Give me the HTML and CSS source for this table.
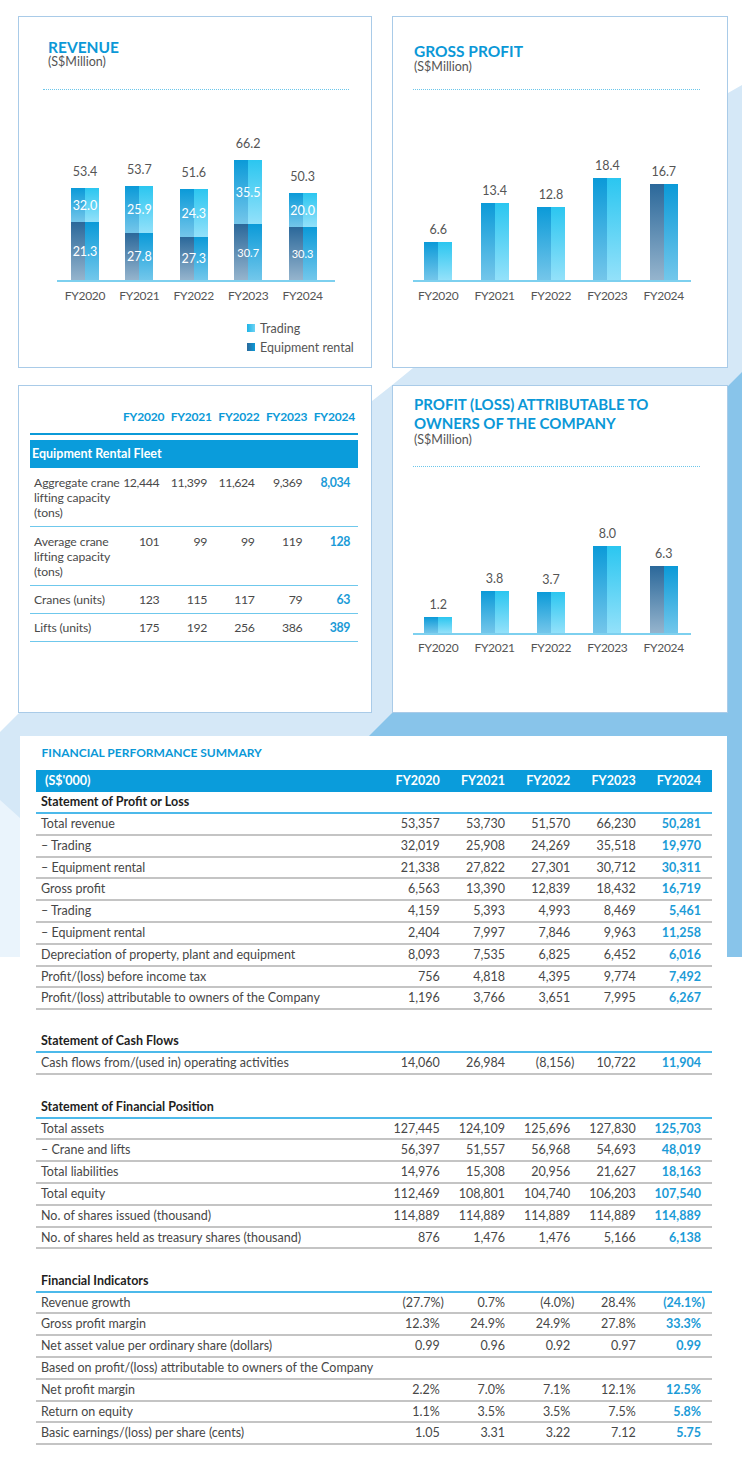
FILE: index.html
```html
<!DOCTYPE html>
<html lang="en">
<head>
<meta charset="utf-8">
<title>Financial Highlights</title>
<link rel="stylesheet" href="styles.css">
</head>
<body>
<svg class="backdrop" width="742" height="1466" viewBox="0 0 742 1466" aria-hidden="true">
  <rect class="bg-pale" x="0" y="780" width="20" height="177"/>
  <polygon class="bg-light" points="742,85 742,957 20,818 0,800 0,732 18,714 372,401 391,386 413,368 728,93"/>
  <polygon class="bg-dark" points="742,372 742,957 368,957 368,737 391,714 728,386"/>
</svg>
<main class="page">
  <div class="cards">
    <section class="card">
      <header class="chart-head head-revenue">
        <h2 class="chart-title">REVENUE</h2>
        <p class="chart-unit">(S$Million)</p>
      </header>
      <div class="dots dots-wide"></div>
      <div class="plot plot-top plot-wide">
        <div class="col">
          <span class="val">53.4</span>
          <div class="bar">
            <div class="seg trade" style="height:34px"><span>32.0</span></div>
            <div class="seg rent" style="height:58px"><span>21.3</span></div>
          </div>
        </div>
        <div class="col">
          <span class="val">53.7</span>
          <div class="bar">
            <div class="seg trade" style="height:47px"><span>25.9</span></div>
            <div class="seg rent" style="height:47px"><span>27.8</span></div>
          </div>
        </div>
        <div class="col">
          <span class="val">51.6</span>
          <div class="bar">
            <div class="seg trade" style="height:48px"><span>24.3</span></div>
            <div class="seg rent" style="height:43px"><span>27.3</span></div>
          </div>
        </div>
        <div class="col">
          <span class="val">66.2</span>
          <div class="bar">
            <div class="seg trade" style="height:64px"><span>35.5</span></div>
            <div class="seg rent" style="height:56px"><span class="small">30.7</span></div>
          </div>
        </div>
        <div class="col">
          <span class="val">50.3</span>
          <div class="bar">
            <div class="seg trade" style="height:34px"><span>20.0</span></div>
            <div class="seg rent" style="height:53px"><span class="small">30.3</span></div>
          </div>
        </div>
      </div>
      <div class="axis axis-wide"></div>
      <div class="years years-wide"><span>FY2020</span><span>FY2021</span><span>FY2022</span><span>FY2023</span><span>FY2024</span></div>
      <ul class="legend">
        <li><i class="key key-trade"></i>Trading</li>
        <li><i class="key key-rent"></i>Equipment rental</li>
      </ul>
    </section>

    <section class="card">
      <header class="chart-head head-gross">
        <h2 class="chart-title">GROSS PROFIT</h2>
        <p class="chart-unit">(S$Million)</p>
      </header>
      <div class="dots dots-narrow"></div>
      <div class="plot plot-top plot-narrow">
        <div class="col"><span class="val">6.6</span><div class="bar solid" style="height:38px"></div></div>
        <div class="col"><span class="val">13.4</span><div class="bar solid" style="height:77px"></div></div>
        <div class="col"><span class="val">12.8</span><div class="bar solid" style="height:73px"></div></div>
        <div class="col"><span class="val">18.4</span><div class="bar solid" style="height:102px"></div></div>
        <div class="col"><span class="val">16.7</span><div class="bar solid latest" style="height:96px"></div></div>
      </div>
      <div class="axis axis-narrow"></div>
      <div class="years years-narrow"><span>FY2020</span><span>FY2021</span><span>FY2022</span><span>FY2023</span><span>FY2024</span></div>
    </section>

    <section class="card fleet">
      <div class="frow fhead"><span></span><span>FY2020</span><span>FY2021</span><span>FY2022</span><span>FY2023</span><span>FY2024</span></div>
      <div class="fband">Equipment Rental Fleet</div>
      <div class="frow fdata">
        <span class="flabel">Aggregate crane<br>lifting capacity<br>(tons)</span>
        <span>12,444</span><span>11,399</span><span>11,624</span><span>9,369</span><span class="hl">8,034</span>
      </div>
      <div class="frow fdata">
        <span class="flabel">Average crane<br>lifting capacity<br>(tons)</span>
        <span>101</span><span>99</span><span>99</span><span>119</span><span class="hl">128</span>
      </div>
      <div class="frow fdata short thick">
        <span class="flabel">Cranes (units)</span>
        <span>123</span><span>115</span><span>117</span><span>79</span><span class="hl">63</span>
      </div>
      <div class="frow fdata short thick">
        <span class="flabel">Lifts (units)</span>
        <span>175</span><span>192</span><span>256</span><span>386</span><span class="hl">389</span>
      </div>
    </section>

    <section class="card">
      <header class="chart-head head-profit">
        <h2 class="chart-title">PROFIT (LOSS) ATTRIBUTABLE TO<br>OWNERS OF THE COMPANY</h2>
        <p class="chart-unit">(S$Million)</p>
      </header>
      <div class="dots dots-narrow"></div>
      <div class="plot plot-low plot-narrow">
        <div class="col"><span class="val">1.2</span><div class="bar solid" style="height:16px"></div></div>
        <div class="col"><span class="val">3.8</span><div class="bar solid" style="height:42px"></div></div>
        <div class="col"><span class="val">3.7</span><div class="bar solid" style="height:41px"></div></div>
        <div class="col"><span class="val">8.0</span><div class="bar solid" style="height:87px"></div></div>
        <div class="col"><span class="val">6.3</span><div class="bar solid latest" style="height:67px"></div></div>
      </div>
      <div class="axis axis-narrow"></div>
      <div class="years years-narrow years-low"><span>FY2020</span><span>FY2021</span><span>FY2022</span><span>FY2023</span><span>FY2024</span></div>
    </section>
  </div>

  <section class="summary">
    <h2 class="sum-title">FINANCIAL PERFORMANCE SUMMARY</h2>
    <div class="sum-table">
      <div class="srow shead"><span>(S$'000)</span><span>FY2020</span><span>FY2021</span><span>FY2022</span><span>FY2023</span><span>FY2024</span></div>

      <div class="srow ssec"><span>Statement of Profit or Loss</span></div>
      <div class="srow sdata"><span>Total revenue</span><span>53,357</span><span>53,730</span><span>51,570</span><span>66,230</span><span class="hl">50,281</span></div>
      <div class="srow sdata"><span>– Trading</span><span>32,019</span><span>25,908</span><span>24,269</span><span>35,518</span><span class="hl">19,970</span></div>
      <div class="srow sdata"><span>– Equipment rental</span><span>21,338</span><span>27,822</span><span>27,301</span><span>30,712</span><span class="hl">30,311</span></div>
      <div class="srow sdata"><span>Gross profit</span><span>6,563</span><span>13,390</span><span>12,839</span><span>18,432</span><span class="hl">16,719</span></div>
      <div class="srow sdata"><span>– Trading</span><span>4,159</span><span>5,393</span><span>4,993</span><span>8,469</span><span class="hl">5,461</span></div>
      <div class="srow sdata"><span>– Equipment rental</span><span>2,404</span><span>7,997</span><span>7,846</span><span>9,963</span><span class="hl">11,258</span></div>
      <div class="srow sdata"><span>Depreciation of property, plant and equipment</span><span>8,093</span><span>7,535</span><span>6,825</span><span>6,452</span><span class="hl">6,016</span></div>
      <div class="srow sdata"><span>Profit/(loss) before income tax</span><span>756</span><span>4,818</span><span>4,395</span><span>9,774</span><span class="hl">7,492</span></div>
      <div class="srow sdata"><span>Profit/(loss) attributable to owners of the Company</span><span>1,196</span><span>3,766</span><span>3,651</span><span>7,995</span><span class="hl">6,267</span></div>

      <div class="sgap"></div>
      <div class="srow ssec"><span>Statement of Cash Flows</span></div>
      <div class="srow sdata"><span>Cash flows from/(used in) operating activities</span><span>14,060</span><span>26,984</span><span>(8,156<i class="cp">)</i></span><span>10,722</span><span class="hl">11,904</span></div>

      <div class="sgap"></div>
      <div class="srow ssec"><span>Statement of Financial Position</span></div>
      <div class="srow sdata"><span>Total assets</span><span>127,445</span><span>124,109</span><span>125,696</span><span>127,830</span><span class="hl">125,703</span></div>
      <div class="srow sdata"><span>– Crane and lifts</span><span>56,397</span><span>51,557</span><span>56,968</span><span>54,693</span><span class="hl">48,019</span></div>
      <div class="srow sdata"><span>Total liabilities</span><span>14,976</span><span>15,308</span><span>20,956</span><span>21,627</span><span class="hl">18,163</span></div>
      <div class="srow sdata"><span>Total equity</span><span>112,469</span><span>108,801</span><span>104,740</span><span>106,203</span><span class="hl">107,540</span></div>
      <div class="srow sdata"><span>No. of shares issued (thousand)</span><span>114,889</span><span>114,889</span><span>114,889</span><span>114,889</span><span class="hl">114,889</span></div>
      <div class="srow sdata"><span>No. of shares held as treasury shares (thousand)</span><span>876</span><span>1,476</span><span>1,476</span><span>5,166</span><span class="hl">6,138</span></div>

      <div class="sgap"></div>
      <div class="srow ssec"><span>Financial Indicators</span></div>
      <div class="srow sdata"><span>Revenue growth</span><span>(27.7%<i class="cp">)</i></span><span>0.7%</span><span>(4.0%<i class="cp">)</i></span><span>28.4%</span><span class="hl">(24.1%<i class="cp">)</i></span></div>
      <div class="srow sdata"><span>Gross profit margin</span><span>12.3%</span><span>24.9%</span><span>24.9%</span><span>27.8%</span><span class="hl">33.3%</span></div>
      <div class="srow sdata"><span>Net asset value per ordinary share (dollars)</span><span>0.99</span><span>0.96</span><span>0.92</span><span>0.97</span><span class="hl">0.99</span></div>
      <div class="srow sdata"><span class="wide">Based on profit/(loss) attributable to owners of the Company</span></div>
      <div class="srow sdata"><span>Net profit margin</span><span>2.2%</span><span>7.0%</span><span>7.1%</span><span>12.1%</span><span class="hl">12.5%</span></div>
      <div class="srow sdata"><span>Return on equity</span><span>1.1%</span><span>3.5%</span><span>3.5%</span><span>7.5%</span><span class="hl">5.8%</span></div>
      <div class="srow sdata"><span>Basic earnings/(loss) per share (cents)</span><span>1.05</span><span>3.31</span><span>3.22</span><span>7.12</span><span class="hl">5.75</span></div>
    </div>
  </section>
</main>
</body>
</html>
```

FILE: styles.css
```css
* {
  box-sizing: border-box;
  margin: 0;
  padding: 0;
}

body {
  margin: 0;
  width: 742px;
  height: 1466px;
  position: relative;
  overflow: hidden;
  background: #ffffff;
  font-family: Lato, "Liberation Sans", sans-serif;
  color: #4a4a4a;
}

.backdrop {
  position: absolute;
  left: 0;
  top: 0;
  z-index: 0;
}

.bg-pale { fill: #eaf4fc; }
.bg-light { fill: #d5e8f7; }
.bg-dark { fill: #88c4ea; }

.page {
  position: relative;
  z-index: 1;
  padding: 16px 0 0 18px;
}

.cards {
  display: grid;
  grid-template-columns: 354px 336px;
  grid-template-rows: 352px 328px;
  column-gap: 20px;
  row-gap: 17px;
}

.card {
  background: #ffffff;
  border: 1px solid #a9cbe8;
}

/* chart headers */
.chart-head { height: 72px; }
.head-revenue { padding: 22px 0 0 29px; }
.head-gross { padding: 25.5px 0 0 21px; }
.head-profit { height: 80px; padding: 9px 0 0 21px; }

.chart-title {
  font-size: 15.5px;
  line-height: 16px;
  font-weight: 700;
  color: #0b98d7;
}

.head-profit .chart-title {
  font-size: 15px;
  line-height: 18.5px;
}

.chart-unit {
  font-size: 12.5px;
  line-height: 14px;
  color: #555555;
}

.head-gross .chart-unit { margin-top: 1px; }
.head-profit .chart-unit { margin-top: 1px; }

.dots {
  height: 1px;
  border-top: 1px dotted #6cc6ea;
}

.dots-wide { margin-left: 24px; width: 306px; }
.dots-narrow { margin-left: 20px; width: 287px; }

/* plots */
.plot {
  display: flex;
  align-items: flex-end;
}

.plot-top { height: 190px; }
.plot-low { height: 166px; }
.plot-wide { margin-left: 38.8px; }
.plot-narrow { margin-left: 17px; }

.col {
  display: flex;
  flex-direction: column;
  align-items: center;
}

.plot-wide .col { flex: 0 0 54.4px; }
.plot-narrow .col { flex: 0 0 56.4px; }

.val {
  font-size: 12.5px;
  line-height: 14px;
  color: #555555;
  margin-bottom: 5px;
}

.plot-wide .val { margin-bottom: 9px; }

.bar {
  width: 28px;
  display: flex;
  flex-direction: column;
}

.seg {
  display: flex;
  align-items: center;
  justify-content: center;
  color: #ffffff;
  font-size: 12.5px;
  white-space: nowrap;
}

.seg .small { font-size: 11px; }

.trade,
.solid {
  background-repeat: no-repeat;
  background-size: 50% 100%, 50% 100%;
  background-position: left top, right top;
  background-image: linear-gradient(#0b9ad8, #74c6ea), linear-gradient(#2bc6f0, #93e1fa);
}

.rent,
.solid.latest {
  background-repeat: no-repeat;
  background-size: 50% 100%, 50% 100%;
  background-position: left top, right top;
  background-image: linear-gradient(#2b689a, #95b4cd), linear-gradient(#0b9ad8, #72c7eb);
}

.axis {
  height: 2px;
  background: #7dd0ef;
}

.axis-wide { margin-left: 38px; width: 278px; }
.axis-narrow { margin-left: 20px; width: 278px; }

.years {
  display: flex;
  margin-top: 7px;
  font-size: 12px;
  letter-spacing: -0.3px;
  line-height: 14px;
  color: #555555;
}

.years span { text-align: center; }
.years-wide { margin-left: 38.8px; }
.years-wide span { flex: 0 0 54.4px; }
.years-narrow { margin-left: 17px; }
.years-narrow span { flex: 0 0 56.4px; }
.years-low { margin-top: 6px; }

.legend {
  list-style: none;
  margin: 15.5px 0 0 228px;
  font-size: 12.5px;
  line-height: 19px;
  color: #555555;
}

.legend li {
  display: flex;
  align-items: center;
}

.key {
  display: block;
  width: 8px;
  height: 8px;
  margin-right: 5px;
}

.key-trade { background: linear-gradient(to right, #1fb4e6, #6dd3f5); }
.key-rent { background: linear-gradient(to right, #2b689a, #0b9ad8); }

/* fleet table */
.fleet {
  padding: 22.5px 13px 0 11px;
  font-size: 12px;
}

.frow {
  display: grid;
  grid-template-columns: 86.5px repeat(5, 47.7px);
}

.frow > span {
  text-align: right;
  white-space: nowrap;
}

.frow > span.flabel {
  text-align: left;
  padding-left: 4px;
  font-size: 12.2px;
  letter-spacing: -0.1px;
}

.fhead {
  line-height: 15px;
  padding-bottom: 9.5px;
  border-bottom: 2px solid #0b9ad8;
  font-weight: 700;
  font-size: 12px;
  letter-spacing: -0.2px;
  color: #0b9ad8;
}

.fband {
  margin-top: 5px;
  height: 28px;
  line-height: 28px;
  background: #0a9cdb;
  color: #ffffff;
  font-weight: 700;
  font-size: 12.5px;
  padding-left: 2px;
}

.fdata {
  padding: 7px 0 6px;
  line-height: 15px;
  border-bottom: 1px solid #6fc8ec;
  color: #4a4a4a;
}

.fdata > span:not(.flabel) {
  padding-right: 5px;
  font-size: 12.3px;
  letter-spacing: -0.4px;
}

.fdata.short { padding: 6px 0; }
.fdata.thick { border-bottom-width: 1.5px; }

.hl {
  color: #1b9bd7;
  font-weight: 700;
}

/* summary */
.summary {
  margin: 23px 0 0 2px;
  width: 707px;
  height: 730px;
  background: #ffffff;
  padding: 8.5px 0 0 16.4px;
}

.sum-title {
  font-size: 12px;
  line-height: 16px;
  font-weight: 700;
  color: #0b98d7;
  padding-left: 5.2px;
}

.sum-table {
  margin-top: 9.5px;
  width: 675.6px;
  font-size: 12.5px;
}

.srow {
  display: grid;
  grid-template-columns: 349.1px repeat(5, 65.3px);
}

.srow > span {
  white-space: nowrap;
}

.srow > span:not(:first-child) {
  text-align: right;
  padding-right: 11px;
}

.srow > span:first-child { padding-left: 4.6px; }

.cp {
  font-style: normal;
  margin-right: -4px;
}

.shead {
  height: 22px;
  line-height: 22px;
  background: #0a9cdb;
  color: #ffffff;
  font-weight: 700;
}

.shead > span:first-child { padding-left: 8.6px; }

.ssec {
  height: 22px;
  line-height: 20.5px;
  border-bottom: 2px solid #4cb9ea;
  font-weight: 700;
  color: #1e1e1e;
}

.sdata {
  height: 21.8px;
  line-height: 20.3px;
  border-bottom: 2px solid #c4c4c4;
  color: #474747;
}

.sgap { height: 21.3px; }
```
